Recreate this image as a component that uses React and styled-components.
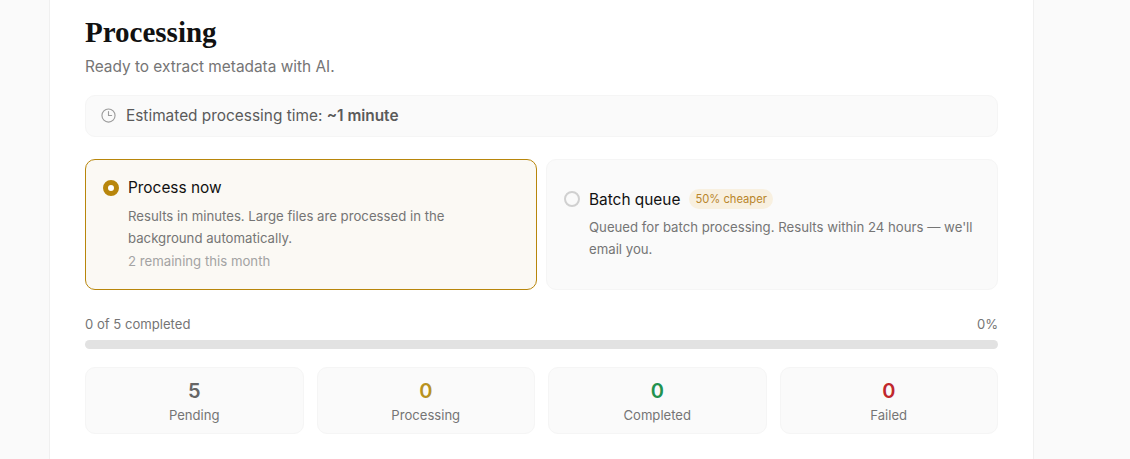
import React from 'react';
import styled, { createGlobalStyle } from 'styled-components';

const GlobalStyle = createGlobalStyle`
  html, body {
    margin: 0;
    height: 459px;
    overflow: hidden;
    background: #fafafa;
    font-family: Inter, "Liberation Sans", sans-serif;
  }
`;

const Page = styled.div`
  width: 1130px;
  height: 459px;
  padding-left: 49px;
  box-sizing: border-box;
  overflow: hidden;
`;

const Card = styled.main`
  width: 985px;
  height: 459px;
  box-sizing: border-box;
  padding: 16px 35px 0 35px;
  background: #fff;
  border-left: 1px solid #f0f0f0;
  border-right: 1px solid #f0f0f0;
`;

const Title = styled.h1`
  margin: 0;
  font-family: "Liberation Serif", serif;
  font-size: 29px;
  line-height: 32px;
  font-weight: 700;
  color: #111;
`;

const Subtitle = styled.p`
  margin: 8px 0 0;
  font-size: 15.4px;
  line-height: 21px;
  color: #757575;
`;

const Estimate = styled.div`
  display: flex;
  align-items: center;
  gap: 10px;
  height: 42px;
  margin-top: 18px;
  padding: 0 15px 2px;
  box-sizing: border-box;
  background: #fafafa;
  border: 1px solid #f5f5f5;
  border-radius: 10px;
  font-size: 15.4px;
  color: #5a5a5a;

  strong {
    font-weight: 600;
  }
`;

const Options = styled.div`
  display: grid;
  grid-template-columns: 452px 452px;
  gap: 9px;
  margin-top: 22px;
`;

const Option = styled.div`
  display: flex;
  flex-direction: column;
  justify-content: center;
  height: 131px;
  padding: 0 17px 2px;
  box-sizing: border-box;
  border: 1px solid ${p => (p.$active ? '#b8860b' : '#f5f5f5')};
  border-radius: 10px;
  background: ${p => (p.$active ? '#fbf9f4' : '#fafafa')};
`;

const OptionHead = styled.div`
  display: flex;
  align-items: center;
  gap: 9px;
  height: 24px;
`;

const Radio = styled.span`
  width: 16px;
  height: 16px;
  box-sizing: border-box;
  flex: none;
  border-radius: 50%;
  background: ${p => (p.$active ? '#fff' : 'transparent')};
  border: ${p => (p.$active ? '5px solid #b8860b' : '2px solid #d0d0d0')};
`;

const OptionName = styled.span`
  font-size: 15.4px;
  font-weight: 400;
  color: #111;
`;

const Badge = styled.span`
  padding: 0 6px;
  height: 20px;
  line-height: 20px;
  border-radius: 10px;
  background: #f8f0e0;
  color: #b8862b;
  font-size: 11.2px;
`;

const OptionText = styled.p`
  margin: 5px 0 0 25px;
  font-size: 13.2px;
  line-height: 22px;
  color: #757575;
`;

const OptionNote = styled.p`
  margin: 1px 0 0 25px;
  font-size: 13.2px;
  line-height: 22px;
  color: #a3a3a3;
`;

const ProgressLabels = styled.div`
  display: flex;
  justify-content: space-between;
  margin-top: 26px;
  font-size: 13.1px;
  line-height: 17px;
  color: #757575;
`;

const ProgressTrack = styled.div`
  height: 9px;
  margin-top: 7px;
  border-radius: 5px;
  background: #e2e2e2;
`;

const Stats = styled.div`
  display: grid;
  grid-template-columns: repeat(4, 1fr);
  gap: 13px;
  margin-top: 18px;
`;

const Stat = styled.div`
  height: 67px;
  box-sizing: border-box;
  padding-top: 11px;
  text-align: center;
  background: #fafafa;
  border: 1px solid #f5f5f5;
  border-radius: 10px;
`;

const StatValue = styled.div`
  font-size: 20px;
  line-height: 24px;
  font-weight: 600;
  color: ${p => p.$color};
`;

const StatLabel = styled.div`
  margin-top: 3px;
  font-size: 13.1px;
  line-height: 18px;
  color: #757575;
`;

const STATS = [
  { label: 'Pending', value: 5, color: '#666' },
  { label: 'Processing', value: 0, color: '#b8921f' },
  { label: 'Completed', value: 0, color: '#22924f' },
  { label: 'Failed', value: 0, color: '#c0272d' },
];

const ClockIcon = () => (
  <svg width="15" height="15" viewBox="0 0 24 24" fill="none" stroke="#9c9c9c" strokeWidth="1.8" strokeLinecap="round" strokeLinejoin="round">
    <circle cx="12" cy="12" r="10.5" />
    <path d="M12 5.5V12h5" />
  </svg>
);

export default function App() {
  return (
    <Page>
      <GlobalStyle />
      <Card>
        <Title>Processing</Title>
        <Subtitle>Ready to extract metadata with AI.</Subtitle>
        <Estimate>
          <ClockIcon />
          <span>Estimated processing time: <strong>~1 minute</strong></span>
        </Estimate>
        <Options>
          <Option $active>
            <OptionHead>
              <Radio $active />
              <OptionName>Process now</OptionName>
            </OptionHead>
            <OptionText>Results in minutes. Large files are processed in the background automatically.</OptionText>
            <OptionNote>2 remaining this month</OptionNote>
          </Option>
          <Option>
            <OptionHead>
              <Radio />
              <OptionName>Batch queue</OptionName>
              <Badge>50% cheaper</Badge>
            </OptionHead>
            <OptionText>Queued for batch processing. Results within 24 hours — we'll email you.</OptionText>
          </Option>
        </Options>
        <ProgressLabels>
          <span>0 of 5 completed</span>
          <span>0%</span>
        </ProgressLabels>
        <ProgressTrack />
        <Stats>
          {STATS.map(stat => (
            <Stat key={stat.label}>
              <StatValue $color={stat.color}>{stat.value}</StatValue>
              <StatLabel>{stat.label}</StatLabel>
            </Stat>
          ))}
        </Stats>
      </Card>
    </Page>
  );
}
